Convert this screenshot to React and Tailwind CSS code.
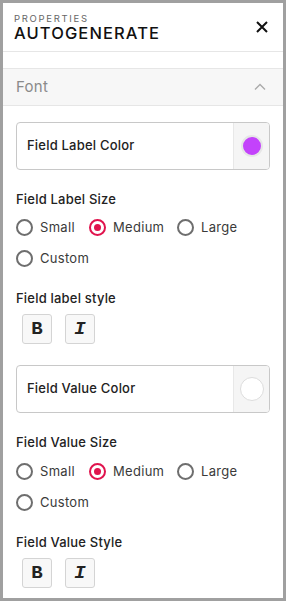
import React from "react";

const font = { fontFamily: "Inter, 'Open Sans', sans-serif" };

function Radio({ checked, label }) {
  return (
    <div className="flex items-center gap-[7px] h-[17px]">
      {checked ? (
        <span className="w-[17px] h-[17px] rounded-full border-2 border-[#e0134d] flex items-center justify-center">
          <span className="w-[7px] h-[7px] rounded-full bg-[#e0134d]" />
        </span>
      ) : (
        <span className="w-[17px] h-[17px] rounded-full border-2 border-[#6e6e6e]" />
      )}
      <span className="text-[13px] leading-[17px] text-[#3a3a3a] tracking-[0.3px]">{label}</span>
    </div>
  );
}

function RadioGroup({ top }) {
  return (
    <div className={`flex flex-col gap-[14px] ${top}`}>
      <div className="flex items-center">
        <div className="w-[73px]"><Radio label="Small" /></div>
        <div className="w-[88px]"><Radio checked label="Medium" /></div>
        <Radio label="Large" />
      </div>
      <Radio label="Custom" />
    </div>
  );
}

function ColorBox({ label, color }) {
  return (
    <div className="h-[48px] shrink-0 border border-[#c8c8c8] rounded-[4px] flex items-stretch overflow-hidden">
      <div className="flex-1 flex items-center pl-[10px] text-[13px] font-medium text-[#222] tracking-[0.2px]">{label}</div>
      <div className="w-[36px] bg-[#f5f5f5] border-l border-[#e8e8e8] flex items-center justify-center">
        {color ? (
          <span className="w-[22px] h-[22px] rounded-full border-2 border-[#e6e6e6]" style={{ background: color }} />
        ) : (
          <span className="w-[24px] h-[24px] rounded-full border border-[#dcdcdc] bg-white" />
        )}
      </div>
    </div>
  );
}

function StyleButtons() {
  return (
    <div className="flex gap-[13px] pl-[6px] mt-[8px]">
      <div className="w-[30px] h-[30px] border border-[#d4d4d4] rounded-[3px] bg-[#f8f8f8] flex items-center justify-center text-[19px] text-[#222]" style={{ fontFamily: "'Liberation Mono', monospace", fontWeight: 700 }}>B</div>
      <div className="w-[30px] h-[30px] border border-[#d4d4d4] rounded-[3px] bg-[#f8f8f8] flex items-center justify-center text-[19px] text-[#222] italic" style={{ fontFamily: "'Liberation Mono', monospace", fontWeight: 700 }}>I</div>
    </div>
  );
}

function Heading({ children }) {
  return <div className="text-[13px] font-medium text-[#222] tracking-[0.2px] leading-[16px]">{children}</div>;
}

export default function App() {
  return (
    <div className="w-[286px] h-[601px] border-[3px] border-[#a0a0a0] bg-white flex flex-col overflow-hidden" style={font}>
      <div className="h-[49px] shrink-0 border-b border-[#e6e6e6] flex items-start justify-between pl-[11px] pr-[14px] pt-[10px]">
        <div>
          <div className="text-[9.5px] leading-[11px] tracking-[1.7px] text-[#666]">PROPERTIES</div>
          <div className="text-[16.5px] leading-[19px] font-medium tracking-[1.1px] text-[#111]">AUTOGENERATE</div>
        </div>
        <svg width="14" height="14" viewBox="0 0 14 14" className="mt-[7px]">
          <path d="M2 2L12 12M12 2L2 12" stroke="#111" strokeWidth="2" />
        </svg>
      </div>
      <div className="h-[16px] shrink-0" />
      <div className="h-[38px] shrink-0 bg-[#f7f7f7] border-y border-[#e6e6e6] flex items-center justify-between pl-[13px] pr-[17px]">
        <span className="text-[15px] text-[#8a8a8a] tracking-[0.3px]">Font</span>
        <svg width="12" height="8" viewBox="0 0 12 8">
          <path d="M1 6.5L6 1.5L11 6.5" stroke="#aaa" strokeWidth="1.3" fill="none" />
        </svg>
      </div>
      <div className="px-[13px] pt-[16px] flex flex-col shrink-0">
        <ColorBox label="Field Label Color" color="#c342fb" />
        <div className="mt-[21px]"><Heading>Field Label Size</Heading></div>
        <RadioGroup top="mt-[12px]" />
        <div className="mt-[23px]"><Heading>Field label style</Heading></div>
        <StyleButtons />
        <div className="mt-[21px]"><ColorBox label="Field Value Color" /></div>
        <div className="mt-[21px]"><Heading>Field Value Size</Heading></div>
        <RadioGroup top="mt-[13px]" />
        <div className="mt-[23px]"><Heading>Field Value Style</Heading></div>
        <StyleButtons />
      </div>
    </div>
  );
}
